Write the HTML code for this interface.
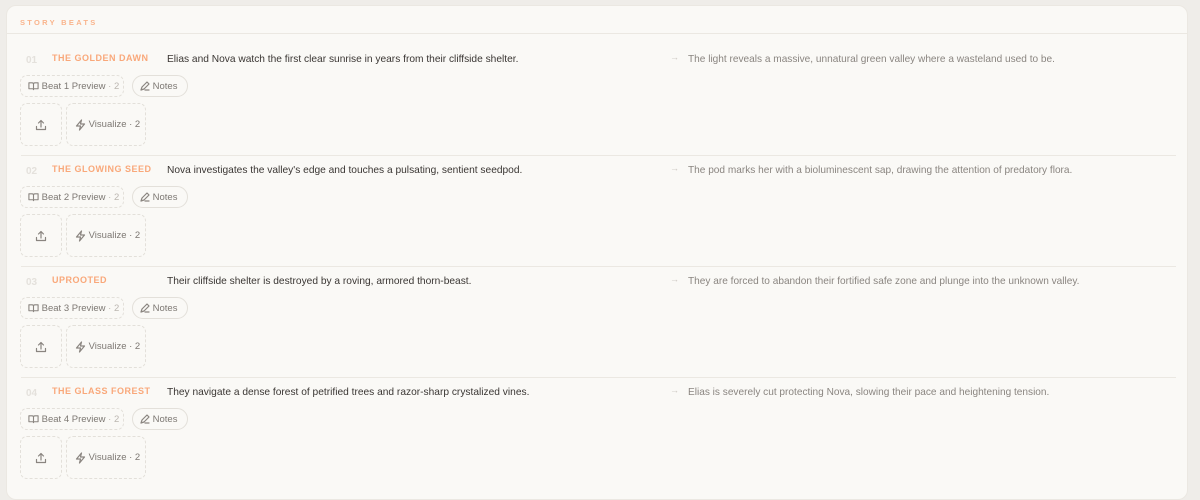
<!DOCTYPE html>
<html><head><style>
*{box-sizing:border-box;margin:0;padding:0}
body{width:1200px;height:487px;background:#efede9;font-family:"Liberation Sans",sans-serif;overflow:hidden;position:relative}
.card{position:absolute;left:6px;top:5px;width:1182px;height:495px;background:#faf9f6;border-radius:10px;border:1px solid #ebe8e2}
.hdr{position:absolute;left:13px;top:12px;font-size:7.5px;font-weight:bold;letter-spacing:2.3px;color:#f9b48c}
.hl{position:absolute;left:0;right:0;top:27px;border-top:1px solid #ebe8e2}
.row{position:absolute;left:0;width:1182px;height:111px}
.num{position:absolute;left:19px;top:49px;font-size:10px;font-weight:bold;color:#e4e1dc}
.ttl{position:absolute;left:45px;top:47px;font-size:9px;font-weight:bold;color:#f9a87a;letter-spacing:.5px}
.desc{position:absolute;left:160px;top:47.5px;font-size:10.2px;color:#3a3633}
.arr{position:absolute;left:663px;top:46px;font-size:9px;color:#ccc8c2}
.res{position:absolute;left:681px;top:47.5px;font-size:10.1px;color:#8a8580}
.chip{position:absolute;top:69px;height:22px;border:1px dashed #e3e0da;border-radius:7px;font-size:9.5px;color:#7d7873;display:flex;align-items:center;padding-left:7px}
.chip.n{border:1px solid #e3e0da;border-radius:11px}
.box{position:absolute;top:97px;height:43px;border:1px dashed #e3e0da;border-radius:7px;display:flex;align-items:center;font-size:9.5px;color:#7d7873}
.sep{position:absolute;left:14px;right:13px;top:149px;border-top:1px solid #ebe8e2}
svg{fill:none;stroke:#8a8580;stroke-width:1.2;stroke-linecap:round;stroke-linejoin:round}
</style></head><body>
<div class="card">
<div class="hdr">STORY BEATS</div><div class="hl"></div>

<div class="row" style="top:0">
<div class="num">01</div><div class="ttl">THE GOLDEN DAWN</div>
<div class="desc">Elias and Nova watch the first clear sunrise in years from their cliffside shelter.</div>
<div class="arr">→</div><div class="res">The light reveals a massive, unnatural green valley where a wasteland used to be.</div>
<div class="chip" style="left:13px;width:104px"><svg width="11" height="10" viewBox="0 0 12 10"><path d="M1 1.5h3.5a1.5 1.5 0 0 1 1.5 1.5v6a1 1 0 0 0-1-1H1zM11 1.5H7.5A1.5 1.5 0 0 0 6 3v6a1 1 0 0 1 1-1h4z"/></svg>&nbsp;Beat 1 Preview <span style="color:#bbb6b0">&nbsp;· 2</span></div>
<div class="chip n" style="left:125px;width:56px"><svg width="10" height="10" viewBox="0 0 10 10"><path d="M1 9l1-3 5-5 2 2-5 5zM5 9h4"/></svg>&nbsp;Notes</div>
<div class="box" style="left:13px;width:42px;justify-content:center"><svg width="12" height="12" viewBox="0 0 12 12"><path d="M6 8V1.5M3.5 4L6 1.5 8.5 4M1.5 7.5v3h9v-3"/></svg></div>
<div class="box" style="left:59px;width:80px;padding-left:8px"><svg width="11" height="12" viewBox="0 0 11 12"><path d="M6.5 1L1.5 7h4l-1 4 5-6h-4z"/></svg>&nbsp;Visualize · 2</div>
<div class="sep"></div></div>

<div class="row" style="top:111px">
<div class="num">02</div><div class="ttl">THE GLOWING SEED</div>
<div class="desc">Nova investigates the valley's edge and touches a pulsating, sentient seedpod.</div>
<div class="arr">→</div><div class="res">The pod marks her with a bioluminescent sap, drawing the attention of predatory flora.</div>
<div class="chip" style="left:13px;width:104px"><svg width="11" height="10" viewBox="0 0 12 10"><path d="M1 1.5h3.5a1.5 1.5 0 0 1 1.5 1.5v6a1 1 0 0 0-1-1H1zM11 1.5H7.5A1.5 1.5 0 0 0 6 3v6a1 1 0 0 1 1-1h4z"/></svg>&nbsp;Beat 2 Preview <span style="color:#bbb6b0">&nbsp;· 2</span></div>
<div class="chip n" style="left:125px;width:56px"><svg width="10" height="10" viewBox="0 0 10 10"><path d="M1 9l1-3 5-5 2 2-5 5zM5 9h4"/></svg>&nbsp;Notes</div>
<div class="box" style="left:13px;width:42px;justify-content:center"><svg width="12" height="12" viewBox="0 0 12 12"><path d="M6 8V1.5M3.5 4L6 1.5 8.5 4M1.5 7.5v3h9v-3"/></svg></div>
<div class="box" style="left:59px;width:80px;padding-left:8px"><svg width="11" height="12" viewBox="0 0 11 12"><path d="M6.5 1L1.5 7h4l-1 4 5-6h-4z"/></svg>&nbsp;Visualize · 2</div>
<div class="sep"></div></div>

<div class="row" style="top:222px">
<div class="num">03</div><div class="ttl">UPROOTED</div>
<div class="desc">Their cliffside shelter is destroyed by a roving, armored thorn-beast.</div>
<div class="arr">→</div><div class="res">They are forced to abandon their fortified safe zone and plunge into the unknown valley.</div>
<div class="chip" style="left:13px;width:104px"><svg width="11" height="10" viewBox="0 0 12 10"><path d="M1 1.5h3.5a1.5 1.5 0 0 1 1.5 1.5v6a1 1 0 0 0-1-1H1zM11 1.5H7.5A1.5 1.5 0 0 0 6 3v6a1 1 0 0 1 1-1h4z"/></svg>&nbsp;Beat 3 Preview <span style="color:#bbb6b0">&nbsp;· 2</span></div>
<div class="chip n" style="left:125px;width:56px"><svg width="10" height="10" viewBox="0 0 10 10"><path d="M1 9l1-3 5-5 2 2-5 5zM5 9h4"/></svg>&nbsp;Notes</div>
<div class="box" style="left:13px;width:42px;justify-content:center"><svg width="12" height="12" viewBox="0 0 12 12"><path d="M6 8V1.5M3.5 4L6 1.5 8.5 4M1.5 7.5v3h9v-3"/></svg></div>
<div class="box" style="left:59px;width:80px;padding-left:8px"><svg width="11" height="12" viewBox="0 0 11 12"><path d="M6.5 1L1.5 7h4l-1 4 5-6h-4z"/></svg>&nbsp;Visualize · 2</div>
<div class="sep"></div></div>

<div class="row" style="top:333px">
<div class="num">04</div><div class="ttl">THE GLASS FOREST</div>
<div class="desc">They navigate a dense forest of petrified trees and razor-sharp crystalized vines.</div>
<div class="arr">→</div><div class="res">Elias is severely cut protecting Nova, slowing their pace and heightening tension.</div>
<div class="chip" style="left:13px;width:104px"><svg width="11" height="10" viewBox="0 0 12 10"><path d="M1 1.5h3.5a1.5 1.5 0 0 1 1.5 1.5v6a1 1 0 0 0-1-1H1zM11 1.5H7.5A1.5 1.5 0 0 0 6 3v6a1 1 0 0 1 1-1h4z"/></svg>&nbsp;Beat 4 Preview <span style="color:#bbb6b0">&nbsp;· 2</span></div>
<div class="chip n" style="left:125px;width:56px"><svg width="10" height="10" viewBox="0 0 10 10"><path d="M1 9l1-3 5-5 2 2-5 5zM5 9h4"/></svg>&nbsp;Notes</div>
<div class="box" style="left:13px;width:42px;justify-content:center"><svg width="12" height="12" viewBox="0 0 12 12"><path d="M6 8V1.5M3.5 4L6 1.5 8.5 4M1.5 7.5v3h9v-3"/></svg></div>
<div class="box" style="left:59px;width:80px;padding-left:8px"><svg width="11" height="12" viewBox="0 0 11 12"><path d="M6.5 1L1.5 7h4l-1 4 5-6h-4z"/></svg>&nbsp;Visualize · 2</div>
</div>
</div>
</body></html>
